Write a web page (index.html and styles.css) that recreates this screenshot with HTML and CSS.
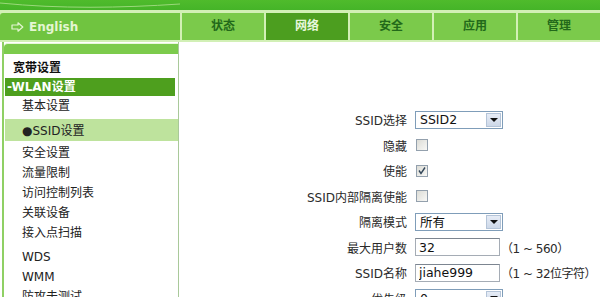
FILE: index.html
```html
<!DOCTYPE html>
<html lang="zh-CN">
<head>
    <meta charset="UTF-8">
    <meta name="viewport" content="width=device-width, initial-scale=1.0">
    <title>WLAN设置</title>
    <link rel="stylesheet" href="styles.css">
</head>
<body>
    <div class="topbar">
        <svg class="swoosh" width="600" height="10" viewBox="0 0 600 10">
            <path d="M0 3 C 60 9, 120 8, 180 4" stroke="#9ad87a" stroke-width="1" fill="none"/>
        </svg>
    </div>
    <div class="nav">
        <div class="lang">
            <svg class="arrow" width="13" height="10" viewBox="0 0 13 10">
                <path d="M1 3 H7 V0.8 L11.8 5 L7 9.2 V7 H1 Z" stroke="#e4f6d2" stroke-width="1.2" fill="none" stroke-linejoin="round"/>
            </svg>
            <span>English</span>
        </div>
        <div class="tab">状态</div>
        <div class="tab active">网络</div>
        <div class="tab">安全</div>
        <div class="tab">应用</div>
        <div class="tab">管理</div>
    </div>
    <div class="main">
        <div class="sidebar">
            <div class="side-head"></div>
            <div class="side-title">宽带设置</div>
            <div class="side-group">-WLAN设置</div>
            <div class="side-item">基本设置</div>
            <div class="side-item current">●SSID设置</div>
            <div class="side-item gap">安全设置</div>
            <div class="side-item">流量限制</div>
            <div class="side-item">访问控制列表</div>
            <div class="side-item">关联设备</div>
            <div class="side-item">接入点扫描</div>
            <div class="side-item wide">WDS</div>
            <div class="side-item">WMM</div>
            <div class="side-item">防攻击测试</div>
        </div>
        <div class="content">
            <div class="form">
                <label>SSID选择</label>
                <div class="field"><div class="select"><span>SSID2</span><i class="drop"></i></div></div>

                <label>隐藏</label>
                <div class="field"><span class="check"></span></div>

                <label>使能</label>
                <div class="field">
                    <span class="check">
                        <svg width="10" height="10" viewBox="0 0 10 10"><path d="M2 4.5 L4 7.5 L8 1.5" stroke="#34475a" stroke-width="1.4" fill="none"/></svg>
                    </span>
                </div>

                <label>SSID内部隔离使能</label>
                <div class="field"><span class="check"></span></div>

                <label>隔离模式</label>
                <div class="field"><div class="select"><span>所有</span><i class="drop"></i></div></div>

                <label>最大用户数</label>
                <div class="field"><input type="text" value="32"><span class="hint">（1 ~ 560）</span></div>

                <label>SSID名称</label>
                <div class="field"><input type="text" value="jiahe999"><span class="hint">（1 ~ 32位字符）</span></div>

                <label>优先级</label>
                <div class="field"><div class="select"><span>0</span><i class="drop"></i></div></div>
            </div>
        </div>
    </div>
</body>
</html>
```

FILE: styles.css
```css
body {
    margin: 0;
    width: 600px;
    height: 297px;
    overflow: hidden;
    background: #ffffff;
    font-family: "DejaVu Sans", "Noto Sans CJK SC", sans-serif;
    font-size: 12px;
    color: #2a2a2a;
}
.topbar {
    height: 10px;
    background: linear-gradient(#4fbb2c, #45b428);
}
.swoosh {
    display: block;
}
.nav {
    display: flex;
    gap: 2px;
    height: 27px;
    padding: 3px 0 2px;
    background: #d2f0b6;
}
.lang {
    display: flex;
    align-items: center;
    gap: 5px;
    width: 180px;
    padding-left: 11px;
    box-sizing: border-box;
    background: #70c440;
    border-top-left-radius: 3px;
    color: #e4f6d2;
    font-weight: bold;
}
.arrow {
    display: block;
}
.tab {
    flex: 1;
    background: #7bca4b;
    color: #22691a;
    font-weight: bold;
    text-align: center;
    line-height: 27px;
}
.tab.active {
    background: #4c9e1f;
    color: #e8f7dc;
}
.main {
    display: flex;
}
.sidebar {
    width: 177px;
    height: 260px;
    margin-left: 2px;
    box-sizing: border-box;
    border-left: 2px solid #8fd064;
    border-right: 1px solid #a9c99a;
    padding-top: 1px;
}
.side-head {
    height: 10px;
    background: #7ccb4c;
    border-top: 1px solid #e8f8dc;
    border-top-left-radius: 4px;
}
.side-title {
    margin-top: 4px;
    padding-left: 9px;
    line-height: 20px;
    font-weight: bold;
    color: #111;
}
.side-group {
    margin: 0 3px 0 1px;
    padding-left: 2px;
    height: 18px;
    line-height: 18px;
    background: #4e9f1e;
    color: #ffffff;
    font-weight: bold;
}
.side-item {
    padding-left: 18px;
    line-height: 20px;
    color: #222;
}
.side-item.current {
    margin: 3px 0 0 1px;
    padding: 3px 0 0 17px;
    line-height: 19px;
    background: #bee39d;
}
.side-item.gap {
    margin-top: 2px;
}
.side-item.wide {
    margin-top: 4px;
}
.content {
    flex: 1;
}
.form {
    display: grid;
    grid-template-columns: 228px auto;
    grid-auto-rows: 25.5px;
    column-gap: 8px;
    align-items: center;
    padding-top: 65px;
}
.form label {
    text-align: right;
    color: #2a2a2a;
}
.field {
    display: flex;
    align-items: center;
    gap: 1px;
    white-space: nowrap;
}
.select {
    display: flex;
    align-items: center;
    justify-content: space-between;
    width: 88px;
    height: 18px;
    box-sizing: border-box;
    border: 1px solid #7f9db9;
    padding: 0 1px 0 4px;
    background: #fff;
    font-size: 12.5px;
    color: #111;
}
.drop {
    position: relative;
    width: 15px;
    height: 14px;
    box-sizing: border-box;
    border: 1px solid #b4c4d8;
    background: linear-gradient(#e6ecf6, #cdd8e8);
}
.drop::after {
    content: "";
    position: absolute;
    left: 3px;
    top: 4px;
    border-left: 4px solid transparent;
    border-right: 4px solid transparent;
    border-top: 4px solid #111;
}
.check {
    display: flex;
    align-items: center;
    justify-content: center;
    width: 12px;
    height: 12px;
    margin-left: 1px;
    box-sizing: border-box;
    border: 1px solid #93a0ad;
    background: linear-gradient(135deg, #dcdcd6, #f8f8f6);
}
input {
    width: 85px;
    height: 18px;
    box-sizing: border-box;
    margin: 0;
    padding: 0 3px;
    border: 1px solid #a5acb5;
    border-top-color: #7c8590;
    font-family: "DejaVu Sans", "Noto Sans CJK SC", sans-serif;
    font-size: 12.5px;
    color: #111;
}
.hint {
    color: #2a2a2a;
    letter-spacing: -0.5px;
}
```
